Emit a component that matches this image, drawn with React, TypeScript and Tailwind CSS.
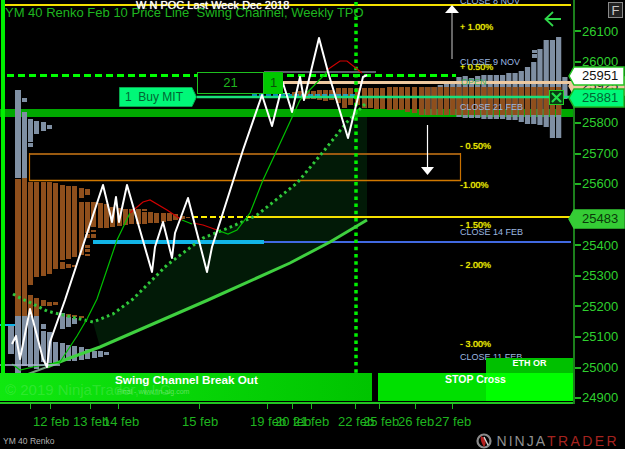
import React from 'react';

const sans = "font-['Liberation_Sans',Arial,sans-serif]";

// every 100 points, 25900 and 25500 sit under the price flags
const priceLabels = ['26100', '26000', '25900', '25800', '25700', '25600', '25500', '25400', '25300', '25200', '25100', '25000', '24900'];

const timeLabels = [
  { text: '12 feb', left: 'left-[33px]' },
  { text: '13 feb', left: 'left-[73px]' },
  { text: '14 feb', left: 'left-[103px]' },
  { text: '15 feb', left: 'left-[182px]' },
  { text: '19 feb', left: 'left-[250px]' },
  { text: '20 feb', left: 'left-[275px]' },
  { text: '21 feb', left: 'left-[293px]' },
  { text: '22 feb', left: 'left-[338px]' },
  { text: '25 feb', left: 'left-[363px]' },
  { text: '26 feb', left: 'left-[398px]' },
  { text: '27 feb', left: 'left-[435px]' },
];
const timeTicks = [30, 50, 90, 118, 199, 267, 292, 311, 355, 379, 415, 452];

const percentLabels = ['+ 1.00%', '+ 0.50%', '', '- 0.50%', '-1.00%', '- 1.50%', '- 2.00%', '', '- 3.00%'];
const closeLabels = [
  { text: 'CLOSE 8 NOV', top: 'top-[-5px]' },
  { text: 'CLOSE 9 NOV', top: 'top-[56px]' },
  { text: 'CLOSE 21 FEB', top: 'top-[101px]' },
  { text: 'CLOSE 14 FEB', top: 'top-[226px]' },
  { text: 'CLOSE 11 FEB', top: 'top-[351px]' },
];

// [x, width, y0, y1]
const leftBrown: number[][] = [
  [15, 6, 179, 316], [22, 5, 178, 316], [28, 5, 182, 285], [28, 5, 295, 316], [34, 5, 182, 277], [34, 5, 298, 316],
  [41, 5, 182, 276], [41, 5, 300, 306], [47, 5, 182, 274], [47, 5, 302, 306], [53, 5, 183, 269], [53, 5, 302, 305], [60, 5, 185, 260], [60, 5, 262, 269],
  [66, 5, 186, 259], [66, 5, 264, 268], [72, 5, 186, 257], [72, 5, 265, 267], [79, 5, 188, 198],
  [79, 5, 202, 255], [85, 5, 189, 195], [85, 5, 202, 233], [85, 5, 234, 238], [85, 5, 245, 248],
  [85, 5, 249, 252], [85, 5, 254, 256], [91, 5, 202, 227], [91, 5, 230, 232], [91, 5, 234, 238],
  [98, 5, 203, 228], [104, 5, 204, 228], [110, 5, 207, 227], [117, 5, 208, 226], [123, 5, 209, 225],
  [129, 5, 209, 224], [136, 5, 209, 224], [142, 5, 209, 211], [142, 5, 212, 224], [148, 5, 212, 223],
  [154, 5, 213, 223], [161, 5, 213, 222], [167, 5, 213, 221], [173, 5, 214, 220], [181, 4, 216, 219], [186, 4, 217, 218],
  [66, 5, 314, 317], [72, 5, 315, 317], [79, 5, 316, 318],
];
const leftGray: number[][] = [
  [15, 6, 90, 178], [22, 5, 98, 102], [22, 5, 112, 178], [28, 5, 119, 142], [28, 5, 143, 147], [34, 5, 121, 134], [41, 5, 122, 131],
  [47, 5, 125, 129], [8, 6, 324, 354], [15, 6, 316, 374], [22, 5, 316, 366], [28, 5, 316, 367],
  [34, 5, 316, 369], [41, 5, 324, 329], [41, 5, 331, 362], [47, 5, 332, 363], [53, 5, 342, 364], [60, 5, 313, 329], [60, 5, 343, 361],
  [66, 5, 317, 327], [66, 5, 345, 361], [72, 5, 318, 324], [72, 5, 346, 361], [79, 5, 347, 360], [85, 5, 349, 359],
  [92, 5, 351, 358], [98, 5, 351, 357], [104, 5, 352, 355],
];
const rightTop = [87, 87, 87, 85, 84, 84, 77, 76, 78, 76, 75, 75, 75, 75, 73, 73, 71, 67, 62, 49, 40, 40, 37, 77];
const rightBottom = [115, 115, 115, 115, 115, 115, 117, 118, 118, 118, 119, 119, 119, 119, 120, 120, 122, 124, 124, 125, 127, 138, 138, 99];
const rightBrownEarly: number[][] = [
  [292, 92, 97], [298, 91, 98], [305, 91, 99], [311, 91, 99], [317, 90, 100], [323, 90, 101], [329, 90, 100], [336, 88, 103],
  [342, 88, 108], [348, 88, 105], [355, 88, 105], [362, 88, 108], [368, 88, 108], [374, 88, 109], [380, 88, 109],
  [387, 87, 110], [393, 87, 110], [399, 87, 110], [405, 87, 112], [412, 87, 113],
];

const whitePath = '12,344 16,336 20,359 30,309 43,359 47,367 50,342 65,300 103,185 112,222 116,197 119,222 127,185 152,272 155,247 163,222 172,258 175,233 188,198 207,272 212,247 243,150 262,95 272,126 283,83 292,112 300,77 304,100 319,38 328,72 348,138 363,77 367,75';
const greenA = '12,364 20,370 33,367 60,362 77,336 87,319 97,299 117,240 130,213';
const greenB = '182,220 192,224';
const greenC = '217,230 228,234 237,230 250,213 263,180 277,150 300,100 327,72';
const redA = '130,213 143,202 150,200 167,210 182,220';
const redB = '193,223 203,225 217,230';
const redC = '327,70 340,61 347,61 362,73';
const dotted = 'M13,294 L22,299 L27,301 L47,311 L67,316 L93,322 L113,314 L133,299 L167,265 L203,238 L233,226 L257,215 L297,183 L323,152 L347,122 L367,102';
const lowerLine = '47,367 67,359 100,347 208,300 290,263 330,242 367,220';
const channelFill = '93,322 113,314 133,299 167,265 203,238 233,226 257,215 297,183 323,152 347,122 367,102 367,220 330,242 290,263 208,300 100,347';

function ChartDrawing() {
  return (
    <svg width="573" height="404" viewBox="0 0 573 404" className="absolute inset-0">
      <polygon points={channelFill} fill="#021a07" />
      {/* horizontal levels */}
      <rect x="0" y="109" width="573" height="8" fill="#00a800" />
      <rect x="5" y="4" width="566" height="2" fill="#f5e000" />
      <path d="M7 75.5H197M287 75.5H456" stroke="#00ff00" strokeWidth="3" strokeDasharray="7 4" />
      <path d="M29 154H461" stroke="#9a5a10" strokeWidth="2" />
      <path d="M29 180.5H461" stroke="#d07800" strokeWidth="1.5" />
      <path d="M29.5 153V181M460.5 153V181" stroke="#c87000" strokeWidth="1.2" />
      <path d="M192 217H250" stroke="#ffee00" strokeWidth="2" strokeDasharray="6 3" />
      <path d="M250 217H571" stroke="#f5e000" strokeWidth="2" />
      <path d="M264 242H571" stroke="#4169e1" strokeWidth="2" />
      <rect x="93" y="240" width="171" height="4" fill="#12b5e8" />
      {/* volume profiles */}
      {leftGray.map(([x, w, a, b], i) => (
        <rect key={'g' + i} x={x} y={a} width={w} height={b - a} fill="#7f8fa3" />
      ))}
      {leftBrown.map(([x, w, a, b], i) => (
        <rect key={'b' + i} x={x} y={a} width={w} height={b - a} fill="#8f4f1c" />
      ))}
      {rightTop.map((t, i) => (
        <rect key={'rg' + i} x={419 + i * 6.23} y={t} width={5.2} height={rightBottom[i] - t} fill="#7f8fa3" />
      ))}
      <rect x="532" y="50" width="5" height="3" fill="#7f8fa3" />
      <rect x="532" y="54" width="5" height="4" fill="#7f8fa3" />
      {rightBrownEarly.map(([x, a, b], i) => (
        <rect key={'re' + i} x={x} y={a} width={5} height={b - a} fill="#8f4f1c" />
      ))}
      {rightTop.slice(0, 23).map((_, i) => (
        <rect key={'rb' + i} x={419 + i * 6.23} y={87} width={5.2} height={28} fill="#8f4f1c" />
      ))}
      {/* lines over the profile */}
      <path d="M283 82.5H573" stroke="#eec9a0" strokeWidth="3" />
      <path d="M264 72H376" stroke="#b9bcd6" strokeWidth="1.2" />
      <path d="M197 93.5H290" stroke="#39e85a" strokeWidth="1" />
      <path d="M197 97H570" stroke="#19e07a" strokeWidth="2.4" />
      <path d="M252 95H355" stroke="#12b5e8" strokeWidth="1.6" strokeDasharray="5 2" />
      <path d="M356 2V400" stroke="#00f000" strokeWidth="3.5" strokeDasharray="3.5 3.7" />
      <path d={dotted} fill="none" stroke="#2fc83a" strokeWidth="3" strokeDasharray="2.6 3.3" />
      <polyline points="5,385 20,377 47,367" fill="none" stroke="#6f9f78" strokeWidth="2" />
      <polyline points={lowerLine} fill="none" stroke="#3fd03f" strokeWidth="3" />
      <polyline points={greenA} fill="none" stroke="#00c000" strokeWidth="1.2" />
      <polyline points={greenB} fill="none" stroke="#00c000" strokeWidth="1.2" />
      <polyline points={greenC} fill="none" stroke="#00c000" strokeWidth="1.2" />
      <polyline points={redA} fill="none" stroke="#d00000" strokeWidth="1.2" />
      <polyline points={redB} fill="none" stroke="#d00000" strokeWidth="1.2" />
      <polyline points={redC} fill="none" stroke="#d00000" strokeWidth="1.2" />
      <path d="M0 365H60" stroke="#aab4d0" strokeWidth="1.4" />
      <path d="M0 325H15" stroke="#12b5e8" strokeWidth="2" />
      <polyline points={whitePath} fill="none" stroke="#ffffff" strokeWidth="2" strokeLinejoin="round" />
      {/* arrows */}
      <path d="M452 59V10" stroke="#a9a9a9" strokeWidth="1.2" />
      <polygon points="452,5 445,13 459,13" fill="#ffffff" />
      <path d="M427.5 125V168" stroke="#ffffff" strokeWidth="1.2" />
      <polygon points="421,167 434,167 427.5,175" fill="#ffffff" />
      <path d="M561 19H546M553 12L545.5 19L553 26" fill="none" stroke="#2fd84a" strokeWidth="1.8" />
      {/* left rail */}
      <rect x="1" y="0" width="4" height="401" fill="#00f000" />
    </svg>
  );
}

function Flag({ text, top, fill, edge, color }: { text: string; top: string; fill: string; edge: string; color: string }) {
  return (
    <div className={`absolute left-[568px] w-[57px] h-[20px] ${top}`}>
      <svg width="57" height="20" viewBox="0 0 57 20" className="absolute inset-0">
        <polygon points="1,10 6,1 56,1 56,19 6,19" fill={fill} stroke={edge} strokeWidth="1.5" />
      </svg>
      <span className={`relative flex h-full items-center pl-[14px] text-[13px] ${color}`}>{text}</span>
    </div>
  );
}

function NinjaLogo() {
  return (
    <svg width="19" height="16" viewBox="0 0 19 16">
      <circle cx="9" cy="8" r="6.5" fill="none" stroke="#8a8a8a" strokeWidth="2.2" />
      <path d="M6 3C11 5 12 10 9 14C7 11 5 7 6 3Z" fill="#b3201f" />
      <path d="M9 4L13 12" stroke="#d8d8d8" strokeWidth="1.4" />
    </svg>
  );
}

export default function App() {
  return (
    <div className={`w-[625px] h-[449px] bg-black flex flex-col overflow-hidden ${sans}`}>
      {/* chart + price scale */}
      <div className="relative flex h-[404px] shrink-0">
        <div className="relative w-[573px] h-full flex flex-col justify-between border-b-2 border-[#22c522]">
          <ChartDrawing />

          <div className="relative flex flex-col">
            <div className="h-[5px] pl-[136px] text-[11px] leading-[10px] text-white whitespace-pre [text-shadow:0_0_1px_#fff]">W N POC Last Week Dec 2018</div>
            <div className="pl-[5px] text-[13px] leading-[15px] text-[#1fb51f] whitespace-pre">YM 40 Renko Feb 10 Price Line  Swing Channel, Weekly TPO</div>
          </div>

          <div className="absolute left-[460px] top-[8px] flex flex-col">
            {percentLabels.map((p, i) => (
              <div key={i} className="h-[39.6px] flex items-center text-[9px] text-[#f0f000] [text-shadow:0_0_1px_#ff0]">{p}</div>
            ))}
          </div>
          {closeLabels.map(c => (
            <div key={c.text} className={`absolute left-[460px] text-[9px] leading-[12px] text-[#9db8e0] whitespace-pre ${c.top}`}>{c.text}</div>
          ))}
          <div className="absolute left-[461px] top-[76px] text-[9px] leading-[12px] text-[#3fa85a]">OPEN</div>

          {/* order ticket */}
          <div className="absolute left-[197px] top-[72px] flex h-[22px] text-[13px]">
            <div className="w-[67px] border border-[#1fc01f] flex items-center justify-center text-[#1fb51f]">21</div>
            <div className="w-[19px] bg-[#00c800] flex items-center justify-center text-[#0a500a]">1</div>
          </div>
          <div className="absolute left-[119px] top-[87px] w-[78px] h-[20px]">
            <svg width="78" height="20" viewBox="0 0 78 20" className="absolute inset-0">
              <polygon points="0.5,0.5 73,0.5 77.5,10 73,19.5 0.5,19.5" fill="#00f878" stroke="#0aa84e" />
            </svg>
            <span className="relative flex h-full items-center pl-[6px] text-[12px] text-[#063] whitespace-pre">1  Buy MIT</span>
          </div>
          <div className="absolute left-[549px] top-[90px] w-[15px] h-[15px] border border-[#22d022] bg-[#0b3a14] flex items-center justify-center">
            <svg width="11" height="11" viewBox="0 0 11 11">
              <path d="M1 1L10 10M10 1L1 10" stroke="#22e04a" strokeWidth="2.2" />
            </svg>
          </div>

          {/* bottom signal bars */}
          <div className="relative flex items-end h-[43px] mb-[1px]">
            <div className="relative w-[372px] h-[28px] bg-linear-to-r from-[#10e810] to-[#00c400] overflow-hidden">
              <div className="pl-[115px] text-[11.7px] leading-[14px] font-bold text-white">Swing Channel Break Out</div>
              <div className="absolute left-[5px] top-[8px] text-[15px] leading-[18px] text-white/15 whitespace-pre">© 2019 NinjaTrader, LLC</div>
              <div className="absolute left-[117px] top-[14px] text-[7px] leading-[10px] text-white/35">Final - www.fin-alg.com</div>
            </div>
            <div className="relative z-10 ml-[6px] w-[108px] h-[28px] bg-[#00e000] pl-[67px] text-[10.5px] leading-[13px] font-bold text-white whitespace-pre">STOP Cross</div>
            <div className="w-[87px] flex flex-col">
              <div className="h-[15px] bg-[#00c000] flex justify-center text-[9px] leading-[10px] font-bold text-white">ETH OR</div>
              <div className="h-[28px] bg-[#00ff00]" />
            </div>
          </div>
        </div>

        {/* price scale */}
        <div className="w-[52px] h-full border-l-2 border-[#1c7f1c] flex flex-col pt-[16px]">
          {priceLabels.map(p => (
            <div key={p} className="h-[30.58px] shrink-0 flex items-center gap-[1px] text-[13px] text-[#2fd02f]">
              <div className="w-[6px] h-[2px] bg-[#22b522]" />
              {p}
            </div>
          ))}
        </div>

        <Flag text="25925" top="top-[76px]" fill="#eec9a0" edge="#eec9a0" color="text-[#222]" />
        <Flag text="25951" top="top-[66px]" fill="#ffffff" edge="#22c522" color="text-[#111]" />
        <Flag text="25881" top="top-[88px]" fill="#00f878" edge="#22b522" color="text-[#063]" />
        <Flag text="25483" top="top-[209px]" fill="#35cc35" edge="#35cc35" color="text-[#0a3a0a]" />

        {/* F button */}
        <div className="absolute left-[608px] top-[2px] w-[15px] h-[16px] border border-[#8a8a8a] bg-[#222] flex items-center justify-center text-[13px] leading-none text-[#c8c8c8]">F</div>
      </div>

      {/* time scale */}
      <div className="relative h-[29px] w-[573px] shrink-0">
        {timeTicks.map(x => (
          <svg key={x} width="1" height="5" viewBox="0 0 1 5" className="absolute top-0" style={{ left: x }}>
            <rect width="1" height="5" fill="#1fb51f" />
          </svg>
        ))}
        {timeLabels.map(t => (
          <div key={t.text} className={`absolute top-[10px] text-[13px] leading-[16px] text-[#1fb51f] whitespace-pre ${t.left}`}>{t.text}</div>
        ))}
      </div>

      {/* footer */}
      <div className="flex items-center justify-between h-[16px] pl-[3px] pr-[6px]">
        <span className="text-[8.5px] text-[#b0b0b0]">YM 40 Renko</span>
        <div className="flex items-center">
          <NinjaLogo />
          <span className="ml-[3px] text-[14px] leading-none tracking-[2px] text-[#8f8f8f]">NINJA</span>
          <span className="text-[14px] leading-none tracking-[2.4px] text-[#a5231f]">TRADER</span>
        </div>
      </div>
    </div>
  );
}
